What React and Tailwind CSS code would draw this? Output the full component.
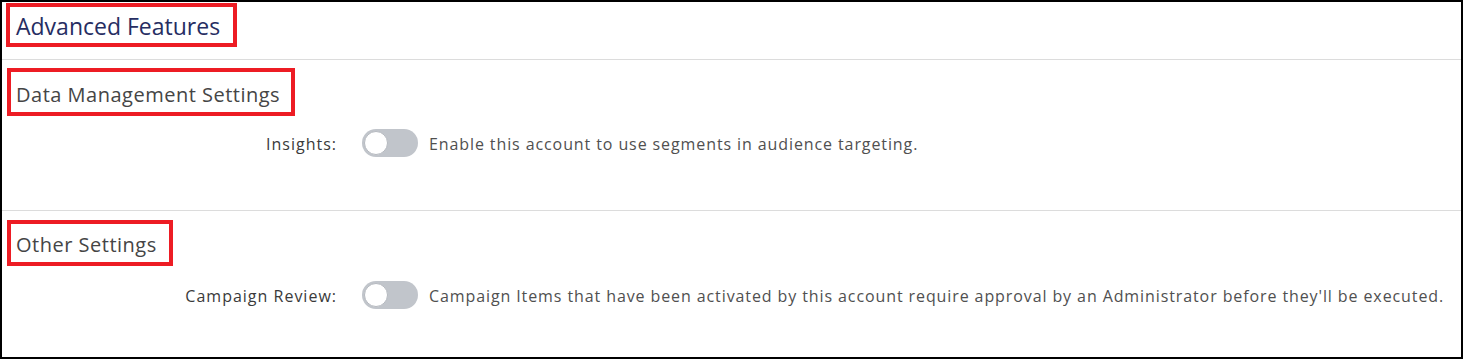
import React from 'react';

const Toggle = () => (
  <span className="relative inline-block w-[56px] h-[28px] rounded-full bg-[#c1c5cb] shrink-0">
    <span className="absolute left-[2px] top-[2px] w-[24px] h-[24px] rounded-full bg-white border border-[#b5b9bf]" />
  </span>
);

const Row = ({ label, text }) => (
  <div className="flex items-center">
    <div className="w-[335px] pb-[4px] text-right text-[16px] tracking-[1px] font-medium text-[#3a3a3a]">{label}</div>
    <div className="ml-[25px]"><Toggle /></div>
    <div className="ml-[11px] pb-[4px] text-[16px] tracking-[0.9px] text-[#505050]">{text}</div>
  </div>
);

const Marked = ({ children, className }) => (
  <div className={`inline-block border-4 border-[#ed1c24] ${className}`}>{children}</div>
);

export default function App() {
  return (
    <div className="w-[1463px] h-[359px] border-2 border-black bg-white font-['Open_Sans',sans-serif]">
      <div className="h-[58px] border-b border-[#dcdcdc] pl-[4px] pt-[1px]">
        <Marked className="w-[231px] h-[44px] pl-[6px] pt-[2px]">
          <span className="text-[23px] text-[#262d62]">Advanced Features</span>
        </Marked>
      </div>
      <div className="h-[151px] border-b border-[#dcdcdc] pl-[5px] pt-[8px]">
        <Marked className="w-[288px] h-[48px] pl-[5px] pt-[8px]">
          <span className="text-[20px] tracking-[0.5px] text-[#454545]">Data Management Settings</span>
        </Marked>
        <div className="mt-[13px] -ml-[5px]">
          <Row label="Insights:" text="Enable this account to use segments in audience targeting." />
        </div>
      </div>
      <div className="pl-[5px] pt-[9px]">
        <Marked className="w-[166px] h-[46px] pl-[5px] pt-[6px]">
          <span className="text-[20px] tracking-[0.5px] text-[#454545]">Other Settings</span>
        </Marked>
        <div className="mt-[15px] -ml-[5px]">
          <Row
            label="Campaign Review:"
            text="Campaign Items that have been activated by this account require approval by an Administrator before they'll be executed."
          />
        </div>
      </div>
    </div>
  );
}
